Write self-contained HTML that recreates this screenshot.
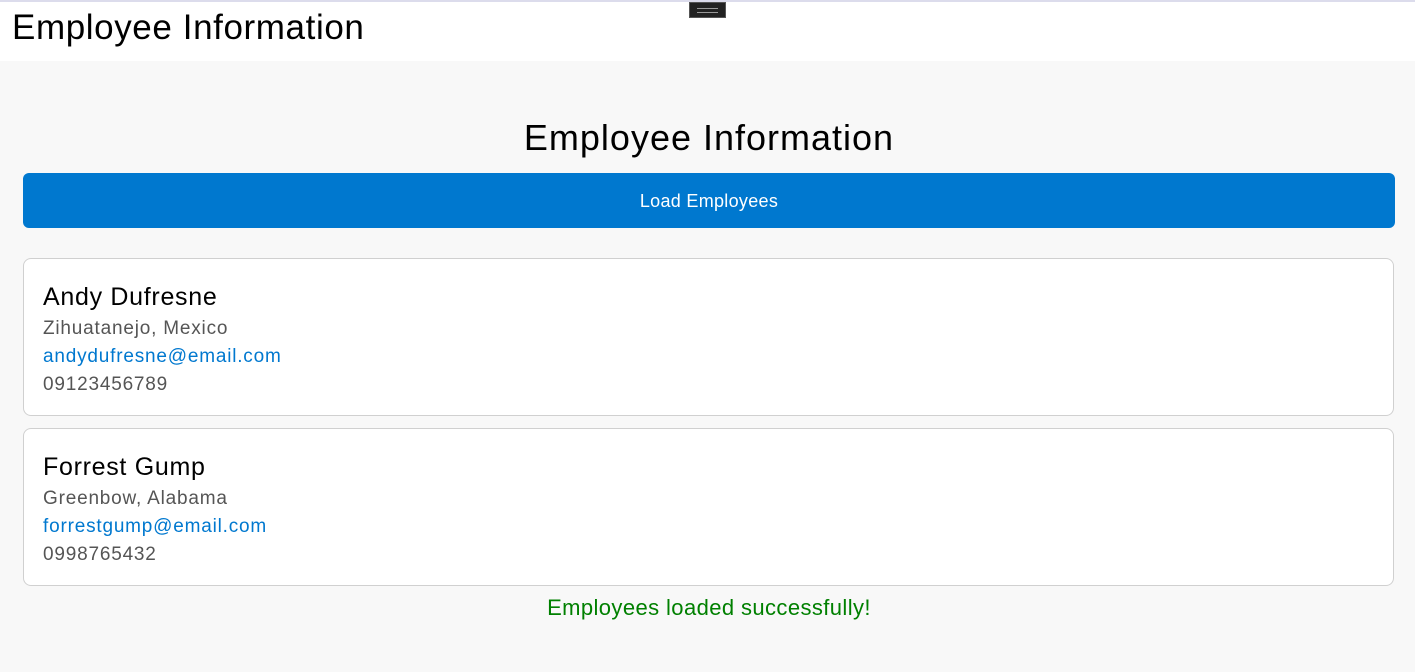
<!DOCTYPE html>
<html><head><style>
body{margin:0;width:1415px;height:672px;background:#f8f8f8;font-family:"Liberation Sans",sans-serif;overflow:hidden;position:relative}
.top{position:absolute;left:0;top:0;width:1415px;height:61px;background:#fff;border-top:2px solid #dcdcec;box-sizing:border-box}
.top h1{margin:0;position:absolute;left:12px;top:6px;font-size:35px;font-weight:normal;letter-spacing:0.6px;color:#000}
.handle{position:absolute;left:689px;top:2px;width:37px;height:16px;background:#222;border:1px solid #555;box-sizing:border-box}
.handle:after{content:"";position:absolute;left:7px;top:5px;width:21px;height:3px;border-top:1px solid #999;border-bottom:1px solid #999}
h2{position:absolute;top:117px;left:0;width:1418px;text-align:center;margin:0;font-size:36px;font-weight:normal;color:#000;letter-spacing:1px}
.btn{position:absolute;left:23px;top:173px;width:1372px;height:55px;background:#0078cf;border-radius:6px;color:#fff;font-size:18px;text-align:center;line-height:56px;letter-spacing:0.3px}
.card{position:absolute;left:23px;width:1369px;height:156px;background:#fff;border:1px solid #d0d0d0;border-radius:8px}
.card .n{position:absolute;left:19px;top:24px;font-size:25px;color:#000;letter-spacing:0.7px}
.card .l{position:absolute;left:19px;font-size:19px;color:#555;letter-spacing:0.8px}
.card .e{color:#0078cf}
.msg{position:absolute;top:595px;width:1418px;text-align:center;color:#008000;font-size:22px;letter-spacing:0.4px}
</style></head><body>
<div class="top"><h1>Employee Information</h1></div>
<div class="handle"></div>
<h2>Employee Information</h2>
<div class="btn">Load Employees</div>
<div class="card" style="top:258px"><div class="n">Andy Dufresne</div><div class="l" style="top:59px">Zihuatanejo, Mexico</div><div class="l e" style="top:87px">andydufresne@email.com</div><div class="l" style="top:115px">09123456789</div></div>
<div class="card" style="top:428px"><div class="n">Forrest Gump</div><div class="l" style="top:59px">Greenbow, Alabama</div><div class="l e" style="top:87px">forrestgump@email.com</div><div class="l" style="top:115px">0998765432</div></div>
<div class="msg">Employees loaded successfully!</div>
</body></html>
